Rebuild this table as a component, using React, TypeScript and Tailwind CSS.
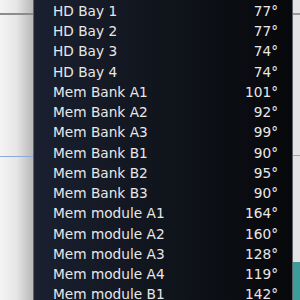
import React from "react";

const rows: [string, string][] = [
  ["HD Bay 1", "77°"],
  ["HD Bay 2", "77°"],
  ["HD Bay 3", "74°"],
  ["HD Bay 4", "74°"],
  ["Mem Bank A1", "101°"],
  ["Mem Bank A2", "92°"],
  ["Mem Bank A3", "99°"],
  ["Mem Bank B1", "90°"],
  ["Mem Bank B2", "95°"],
  ["Mem Bank B3", "90°"],
  ["Mem module A1", "164°"],
  ["Mem module A2", "160°"],
  ["Mem module A3", "128°"],
  ["Mem module A4", "119°"],
  ["Mem module B1", "142°"],
];

export default function App() {
  return (
    <div className="w-[300px] h-[300px] flex overflow-hidden bg-white" style={{ fontFamily: '"DejaVu Sans", "Lucida Grande", sans-serif' }}>
      <div className="w-[33px] flex flex-col bg-gradient-to-r from-[#f4f4f4] via-[#e6e6e6] to-[#b8b8b8]">
        <div className="mt-[13px] h-[2px] bg-[#8c8c8c]" />
        <div className="mt-[141px] h-[1px] bg-[#8fa8dc]" />
      </div>
      <div className="w-[260px] flex flex-col border-l border-r border-[#5c6470] bg-gradient-to-r from-[#1a2030] via-[#10141c] to-[#07080b] pt-[1px]">
        {rows.map(([name, val]) => (
          <div key={name} className="h-[20.25px] shrink-0 flex items-center justify-between pl-[19px] pr-[14px] text-[13.7px] text-[#e8e8e8]">
            <span>{name}</span>
            <span>{val}</span>
          </div>
        ))}
      </div>
      <div className="flex-1 flex flex-col bg-[#e4e4e4]">
        <div className="mt-[13px] h-[2px] bg-[#9a9a9a]" />
        <div className="mt-[140px] h-[1px] bg-[#8fa8dc]" />
        <div className="flex-1" />
        <div className="h-[38px] bg-[#3c9c9a]" />
      </div>
    </div>
  );
}
